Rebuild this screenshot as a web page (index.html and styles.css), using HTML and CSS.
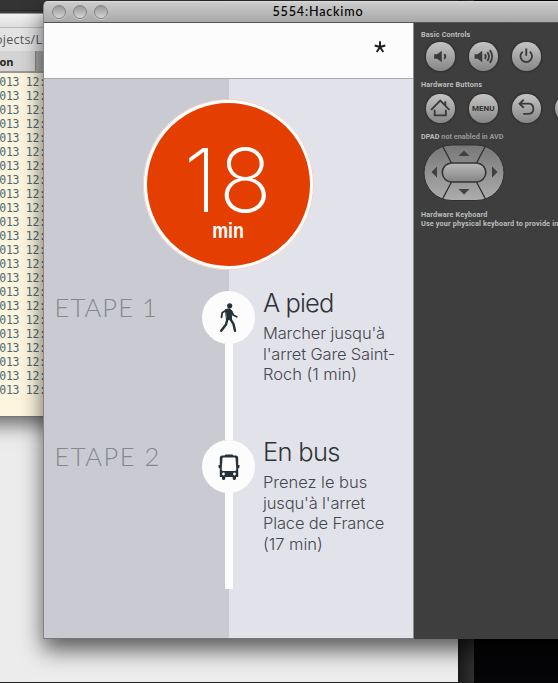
FILE: index.html
```
<!DOCTYPE html>
<html lang="fr">
<head>
<meta charset="utf-8">
<title>5554:Hackimo</title>
<link rel="stylesheet" href="styles.css">
</head>
<body>
<div class="desktop">
  <div class="backwin">
    <div class="edge"></div>
  </div>
  <div class="logwin">
    <div class="logtitle"></div>
    <div class="path">ojects/L</div>
    <div class="tabs"><span class="tab">on</span><span class="tab-next"></span></div>
    <div class="log">
      <div>013 12:</div><div>013 12:</div><div>013 12:</div><div>013 12:</div><div>013 12:</div><div>013 12:</div>
      <div>013 12:</div><div>013 12:</div><div>013 12:</div><div>013 12:</div><div>013 12:</div><div>013 12:</div>
      <div>013 12:</div><div>013 12:</div><div>013 12:</div><div>013 12:</div><div>013 12:</div><div>013 12:</div>
      <div>013 12:</div><div>013 12:</div><div>013 12:</div><div>013 12:</div><div>013 12:</div>
    </div>
  </div>

  <div class="emulator">
    <header class="titlebar">
      <i class="light"></i><i class="light"></i><i class="light"></i>
      <span class="title">5554:Hackimo</span>
    </header>
    <div class="content">
      <main class="phone">
        <div class="appbar">
          <svg width="12" height="12" viewBox="0 0 12 12"><path d="M6 6V.3M6 6L.7 4.500M6 6l5.300-1.500M6 6l-3.300 5M6 6l3.300 5" stroke="#1c1c22" stroke-width="1.900" fill="none"/></svg>
        </div>
        <section class="trip">
          <div class="total"><span class="num">18</span><span class="unit">min</span></div>
          <div class="step">
            <div class="label">ETAPE 1</div>
            <div class="rail">
              <div class="dot">
                <svg width="53" height="53" viewBox="0 0 53 53" fill="none" stroke="#263238" stroke-linecap="round" stroke-linejoin="round">
                  <circle cx="27.700" cy="14.800" r="2.600" fill="#263238" stroke="none"/>
                  <path d="M23.800 18.500l3.700-.8 2.600 2.500-.8 8.300-4.500.2z" fill="#263238" stroke-width="1"/>
                  <path d="M24.500 19l-4.300 2.800-.7 4.600M29.500 20.500l2 3.700 3.200 1.600" stroke-width="1.800"/>
                  <path d="M25.600 27.500l-1.600 6-4.800 6.200M28 27.500l3.400 5.300 1.600 7" stroke-width="2.400"/>
                </svg>
              </div>
              <div class="line"></div>
            </div>
            <div class="info">
              <h2 class="walk">A pied</h2>
              <p><span>Marcher jusqu'à</span><br><span>l'arret Gare Saint-</span><br><span class="wide">Roch (1 min)</span></p>
            </div>
          </div>
          <div class="step">
            <div class="label two">ETAPE 2</div>
            <div class="rail">
              <div class="dot">
                <svg width="53" height="53" viewBox="0 0 53 53">
                  <path fill="#263238" fill-rule="evenodd" d="M22.500 15.500l1-1h7l1 1h2.500q2.200 0 2.200 3V25h1.300v2.500l-1.300 1V37H34v1.500q-.2 1.500-1.700 1.500t-1.600-1.500V37h-7.400v1.500q-.2 1.500-1.700 1.500t-1.600-1.500V37h-2.200v-8.500l-1.300-1V25h1.300v-6.500q0-3 2.200-3zM20.500 18l-.8 11.500q0 1.500 1.500 1.500h11.600q1.500 0 1.500-1.500L33.500 18q-.2-.5-1-.5h-11q-.8 0-1 .5z"/>
                  <circle cx="21.500" cy="34" r="1.400" fill="#fff"/><circle cx="32.500" cy="34" r="1.400" fill="#fff"/>
                </svg>
              </div>
              <div class="line"></div>
            </div>
            <div class="info">
              <h2 class="bus">En bus</h2>
              <p><span class="wide">Prenez le bus</span><br><span>jusqu'à l'arret</span><br><span>Place de France</span><br><span class="wide">(17 min)</span></p>
            </div>
          </div>
        </section>
      </main>
      <aside class="panel">
        <h3>Basic Controls</h3>
        <div class="buttons first">
          <span class="btn"><svg viewBox="0 0 28 28"><path d="M8 12h3l4.500-3.500v11.500l-4.500-3.500H8z" fill="#3a3a3a"/><path d="M18 12q2 2.300 0 4.500" class="ink"/></svg></span>
          <span class="btn"><svg viewBox="0 0 28 28"><path d="M5.500 12h3l4.500-3.500v11.500l-4.500-3.500h-3z" fill="#3a3a3a"/><path d="M15.500 12q2 2.300 0 4.500M18 10q3.300 4.300 0 8.500M20.500 8q4.600 6.300 0 12.500" class="ink"/></svg></span>
          <span class="btn"><svg viewBox="0 0 28 28"><path d="M10.500 9.500a5.700 5.700 0 1 0 7 0M14 6.500v7" class="ink"/></svg></span>
        </div>
        <h3>Hardware Buttons</h3>
        <div class="buttons second">
          <span class="btn"><svg viewBox="0 0 28 28"><path d="M5 15.500L14 6.500l9 9M8.500 15.500V21h11v-5.500M19 11V7" class="ink"/></svg></span>
          <span class="btn menu">MENU</span>
          <span class="btn"><svg viewBox="0 0 28 28"><path d="M11.500 5.500L7.500 9.500l4 4M8 9.500h8.500q4.500.2 4.500 5t-4.500 5H11" class="ink"/></svg></span>
          <span class="btn"></span>
        </div>
        <h3 class="dpad-title">DPAD <span>not enabled in AVD</span></h3>
        <svg class="dpad" width="82" height="58" viewBox="0 0 82 58">
          <defs>
            <linearGradient id="pad" x2="0" y2="1"><stop stop-color="#777"/><stop offset="1" stop-color="#adadad"/></linearGradient>
            <linearGradient id="key" x2="0" y2="1"><stop stop-color="#bababa"/><stop offset="1" stop-color="#858585"/></linearGradient>
          </defs>
          <rect x="1" y="1" width="80" height="55.500" rx="27.700" fill="url(#pad)" stroke="#303030"/>
          <path d="M19.500 2l9 17M62.500 2l-9 17M28.500 38l-9 17M53.500 38l9 17" stroke="#343434" stroke-width="1.400"/>
          <rect x="19.300" y="19" width="43.500" height="19" rx="9.500" fill="url(#key)" stroke="#343434" stroke-width="1.600"/>
          <path d="M35.500 12h11L41 6.500zM35.500 45h11L41 50.500zM14 22.500v11L8.500 28zM69 22.500v11l5.500-5.500z" fill="#404040"/>
        </svg>
        <h3 class="keyboard">Hardware Keyboard<br>Use your physical keyboard to provide input</h3>
      </aside>
    </div>
  </div>
</div>
</body>
</html>
```
FILE: styles.css
```
* { box-sizing: border-box; }
body { margin: 0; }
.desktop {
  position: relative; width: 558px; height: 683px; overflow: hidden;
  background: #050507; font-family: "Liberation Sans", sans-serif;
}
.backwin {
  position: absolute; left: 0; top: 0; width: 474px; height: 683px;
  display: flex; justify-content: flex-end;
  background: linear-gradient(#2c2a2e 12px, #ececec 12px); border-bottom: 1px solid #222;
}
.edge { width: 16px; background: linear-gradient(90deg, #1b1b1b, #303030); }

.logwin {
  position: absolute; left: -60px; top: 0; width: 260px; height: 417px;
  background: #fdf5dd; border-bottom: 1px solid #777;
  box-shadow: 0 8px 18px rgba(0,0,0,.55);
}
.logtitle { height: 28px; background: linear-gradient(#343434 0 10px, #262626 10px 11px, #3b3b3b 11px 13px, #f2f2f2 14px, #dedede 27px, #bbb 27px); }
.path {
  height: 23px; padding-left: 55px; background: #e3e3e3;
  font: 12.500px/24px "Open Sans", sans-serif; color: #555; letter-spacing: .25px;
}
.tabs { display: flex; height: 22px; background: #aaa; border-bottom: 2px solid #999; }
.tab {
  width: 96px; padding-left: 59.500px; background: #d4d4d4; border-right: 1px solid #888;
  font: bold 11px/22px "Open Sans", sans-serif; color: #222;
}
.log {
  padding: 2px 0 0 59.300px; font: 11.500px/14px "DejaVu Sans Mono", monospace; color: #4c6b78; letter-spacing: -.3px;
}

.emulator {
  position: absolute; left: 43px; top: 1px; width: 620px; height: 638px;
  border-radius: 5px 5px 0 0; border-left: 1px solid #84848a;
  background: #3e3e3e;
  box-shadow: 0 11px 22px rgba(0,0,0,.62);
}
.titlebar {
  display: flex; align-items: center; gap: 7px; height: 22px; padding-left: 8px;
  border-radius: 4px 4px 0 0; border-bottom: 1px solid #555;
  background: linear-gradient(#dedede, #cacaca 10%, #a8a8a8);
}
.light {
  width: 14px; height: 14px; border-radius: 50%; border: 1px solid #858585;
  background: linear-gradient(#999, #bbb 60%, #d5d5d5); box-shadow: 0 1px 0 #ccc;
}
.title { margin-left: 157.500px; font: 500 12.600px/20px Lato, sans-serif; color: #000; white-space: nowrap; letter-spacing: .8px; }
.content { display: flex; height: 616px; }
.phone { width: 370px; flex: none; border-right: 1px solid #8b8b90; border-bottom: 1px solid #77777b; }
.appbar {
  display: flex; justify-content: flex-end; height: 56px; padding: 18px 27px 0 0;
  background: #fcfcfc; border-bottom: 1px solid #a9a9b0;
}
.trip { height: 559px; padding-top: 20px; background: linear-gradient(90deg, #cacbd2 185.500px, #e2e3ea 185.500px); }
.total {
  display: flex; flex-direction: column; align-items: center;
  width: 171px; height: 171px; margin: 0 0 21px 99px; border-radius: 50%;
  border: 4px solid #fff; background: #e43f00; color: #fff; outline: 1px solid rgba(220,120,90,.35); outline-offset: -1px;
}
.num { height: 112px; padding-top: 42px; font: 200 88px/70px Inter, sans-serif; letter-spacing: 1.500px; }
.unit { font: bold 21.500px/33px "Liberation Sans", sans-serif; transform: scaleX(.83); }
.step { display: grid; grid-template-columns: 158px 53px 1fr; height: 149px; }
.label { padding-left: 10.500px; font: 300 25.500px/32px Lato, sans-serif; color: #85888d; letter-spacing: 1.100px; white-space: nowrap; }
.two { letter-spacing: 1.500px; }
.rail { display: flex; flex-direction: column; align-items: center; }
.dot { width: 53px; height: 53px; border-radius: 50%; background: #fcfcfc; }
.dot svg { display: block; }
.line { width: 8px; flex: 1; background: #fcfcfc; margin-top: -1px; }
.info { padding-left: 8px; color: #303338; white-space: nowrap; }
.info h2 { margin: 0; font: 300 25.500px/24px Inter, sans-serif; letter-spacing: -.9px; }
.info .bus { letter-spacing: -.7px; }
.info p { margin: 8px 0 0; font: 300 16.500px/20.700px Inter, sans-serif; color: #44474d; letter-spacing: -.15px; }
.info .wide { letter-spacing: -.02px; }

.panel { flex: 1; padding: 6px 0 0 7px; color: #bcbcbc; white-space: nowrap; }
.panel h3 { margin: 0; font: bold 7.300px/11px Roboto, sans-serif; letter-spacing: .13px; }
.buttons { display: flex; gap: 14.500px; padding-left: 5px; }
.first { padding-top: 2px; height: 39px; }
.second { padding-top: 4px; height: 41px; }
.btn {
  flex: none; width: 28.500px; height: 28.500px; border-radius: 50%;
  background: linear-gradient(#c4c4c4, #868686); box-shadow: 0 0 0 1px #333, 0 0 3px #222;
}
.btn svg { display: block; width: 28.500px; height: 28.500px; }
.ink { fill: none; stroke: #3a3a3a; stroke-width: 1.800; }
.menu { font: bold 8px/29px Roboto, sans-serif; color: #333; text-align: center; }
.panel .dpad-title { letter-spacing: 0; }
.dpad-title span { color: #999; }
.dpad { display: block; margin: 2px 0 0 2px; }
.panel .keyboard { margin-top: 9px; line-height: 8.500px; }
```
